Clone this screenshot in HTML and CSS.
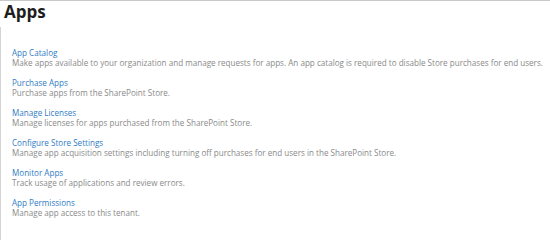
FILE: index.html
```html
<!DOCTYPE html>
<html lang="en">
<head>
<meta charset="utf-8">
<title>Apps</title>
<link rel="stylesheet" href="styles.css">
</head>
<body>
<div class="page">
  <h1 class="title">Apps</h1>
  <div class="content">
    <ul class="items">
      <li class="item"><a class="link" href="#">App Catalog</a><span class="desc">Make apps available to your organization and manage requests for apps. An app catalog is required to disable Store purchases for end users.</span></li>
      <li class="item"><a class="link" href="#">Purchase Apps</a><span class="desc">Purchase apps from the SharePoint Store.</span></li>
      <li class="item"><a class="link" href="#">Manage Licenses</a><span class="desc">Manage licenses for apps purchased from the SharePoint Store.</span></li>
      <li class="item"><a class="link" href="#">Configure Store Settings</a><span class="desc">Manage app acquisition settings including turning off purchases for end users in the SharePoint Store.</span></li>
      <li class="item"><a class="link" href="#">Monitor Apps</a><span class="desc">Track usage of applications and review errors.</span></li>
      <li class="item"><a class="link" href="#">App Permissions</a><span class="desc">Manage app access to this tenant.</span></li>
    </ul>
  </div>
</div>
</body>
</html>
```
FILE: styles.css
```css
html, body {
  margin: 0;
  padding: 0;
  background: #ffffff;
}
.page {
  height: 100vh;
  box-sizing: border-box;
  display: flex;
  flex-direction: column;
  border-top: 1px solid #c8c8c8;
  font-family: "Open Sans", "Noto Sans", "Liberation Sans", sans-serif;
}
.title {
  margin: -1px 0 4px 0;
  padding-left: 4px;
  font-size: 17px;
  line-height: 23px;
  font-weight: 700;
  color: #1e1e1e;
}
.content {
  flex: 1;
  border-left: 1px solid #d4d4d4;
  padding: 21px 0 0 11px;
}
.items {
  list-style: none;
  margin: 0;
  padding: 0;
  display: flex;
  flex-direction: column;
  gap: 10px;
}
.item {
  display: flex;
  flex-direction: column;
  font-size: 8.1px;
  line-height: 10px;
  white-space: nowrap;
}
.link {
  color: #2f7bc4;
  text-decoration: none;
  align-self: flex-start;
}
.desc {
  color: #8a8a8a;
}
```
